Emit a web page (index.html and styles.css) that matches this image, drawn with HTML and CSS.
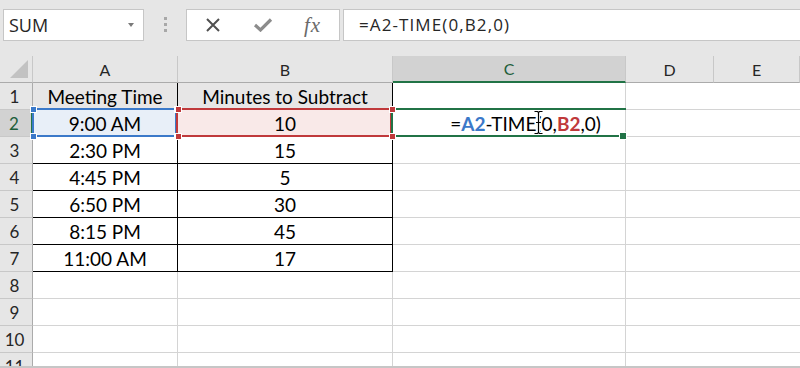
FILE: index.html
```html
<!DOCTYPE html>
<html lang="en">
<head>
    <meta charset="UTF-8">
    <meta name="viewport" content="width=device-width, initial-scale=1.0">
    <title>Subtract minutes from time</title>
    <link rel="stylesheet" href="styles.css">
</head>
<body>
    <div class="toolbar">
        <div class="name-box"><span>SUM</span><span class="caret"></span></div>
        <div class="grip"><i></i><i></i><i></i></div>
        <div class="fx-buttons">
            <svg class="btn-cancel" width="16" height="16" viewBox="0 0 16 16">
                <path d="M2 2 L14 14 M14 2 L2 14" stroke="#505050" stroke-width="2" fill="none"/>
            </svg>
            <svg class="btn-enter" width="20" height="14" viewBox="0 0 20 14">
                <path d="M2 7 L7.5 12 L18 1.5" stroke="#8c8c8c" stroke-width="3.2" fill="none"/>
            </svg>
            <span class="btn-fx">fx</span>
        </div>
        <div class="formula">=A2-TIME(0,B2,0)</div>
    </div>

    <div class="sheet">
        <!-- column headers -->
        <div class="hd corner">
            <svg width="33" height="26" viewBox="0 0 33 26"><polygon points="28,4 28,22 10,22" fill="#c2c2c2"/></svg>
        </div>
        <div class="hd">A</div>
        <div class="hd">B</div>
        <div class="hd col-sel">C</div>
        <div class="hd no-line">D</div>
        <div class="hd no-line">E</div>

        <!-- row 1 -->
        <div class="rh">1</div>
        <div class="c t title">Meeting Time</div>
        <div class="c t title">Minutes to Subtract</div>
        <div class="c"></div>
        <div class="c no-line"></div>
        <div class="c no-line"></div>

        <!-- row 2 -->
        <div class="rh row-sel">2</div>
        <div class="c t ref ref-blue">9:00 AM
            <i class="h tl"></i><i class="h bl"></i><i class="h tr"></i><i class="h br"></i>
        </div>
        <div class="c t ref ref-red">10
            <i class="h tl"></i><i class="h bl"></i><i class="h tr"></i><i class="h br"></i>
        </div>
        <div class="c active">
            <span class="edit">=<b class="blue">A2</b>-TIME(0,<b class="red">B2</b>,0)</span>
            <svg class="ibeam" width="11" height="25" viewBox="0 0 11 25">
                <path d="M1.5 1.5 H4.5 L5.5 2.5 L6.5 1.5 H9.5 M5.5 2.5 V22.5 M1.5 23.5 H4.5 L5.5 22.5 L6.5 23.5 H9.5 M3 12.5 H8" stroke="#fff" stroke-width="3" fill="none"/>
                <path d="M1.5 1.5 H4.5 L5.5 2.5 L6.5 1.5 H9.5 M5.5 2.5 V22.5 M1.5 23.5 H4.5 L5.5 22.5 L6.5 23.5 H9.5 M3 12.5 H8" stroke="#000" stroke-width="1.2" fill="none"/>
            </svg>
            <i class="fill"></i>
        </div>
        <div class="c no-line"></div>
        <div class="c no-line"></div>

        <!-- rows 3 - 7 -->
        <div class="rh">3</div>
        <div class="c t">2:30 PM</div>
        <div class="c t">15</div>
        <div class="c"></div><div class="c no-line"></div><div class="c no-line"></div>

        <div class="rh">4</div>
        <div class="c t">4:45 PM</div>
        <div class="c t">5</div>
        <div class="c"></div><div class="c no-line"></div><div class="c no-line"></div>

        <div class="rh">5</div>
        <div class="c t">6:50 PM</div>
        <div class="c t">30</div>
        <div class="c"></div><div class="c no-line"></div><div class="c no-line"></div>

        <div class="rh">6</div>
        <div class="c t">8:15 PM</div>
        <div class="c t">45</div>
        <div class="c"></div><div class="c no-line"></div><div class="c no-line"></div>

        <div class="rh">7</div>
        <div class="c t">11:00 AM</div>
        <div class="c t">17</div>
        <div class="c"></div><div class="c no-line"></div><div class="c no-line"></div>

        <!-- empty rows -->
        <div class="rh">8</div>
        <div class="c"></div><div class="c"></div><div class="c"></div><div class="c no-line"></div><div class="c no-line"></div>
        <div class="rh">9</div>
        <div class="c"></div><div class="c"></div><div class="c"></div><div class="c no-line"></div><div class="c no-line"></div>
        <div class="rh">10</div>
        <div class="c"></div><div class="c"></div><div class="c"></div><div class="c no-line"></div><div class="c no-line"></div>
        <div class="rh">11</div>
        <div class="c"></div><div class="c"></div><div class="c"></div><div class="c no-line"></div><div class="c no-line"></div>
    </div>
    <div class="footer"></div>
</body>
</html>
```

FILE: styles.css
```css
* {
    box-sizing: border-box;
}
body {
    margin: 0;
    width: 800px;
    height: 368px;
    overflow: hidden;
    background-color: #e6e6e6;
    font-family: Lato, "Liberation Sans", sans-serif;
    color: #000;
}

/* formula bar */
.toolbar {
    display: flex;
    height: 56px;
    padding: 9px 0 0 3px;
}
.name-box {
    width: 141px;
    height: 32px;
    background-color: #fff;
    border: 1px solid #c6c6c6;
    display: flex;
    align-items: center;
    justify-content: space-between;
    padding: 0 9px 0 5px;
    font-family: "Open Sans", sans-serif;
    font-size: 18px;
    color: #262626;
}
.name-box .caret {
    width: 0;
    height: 0;
    border-left: 3.5px solid transparent;
    border-right: 3.5px solid transparent;
    border-top: 4px solid #7a7a7a;
}
.grip {
    width: 42px;
    display: flex;
    flex-direction: column;
    align-items: center;
    gap: 3px;
    padding-top: 8px;
}
.grip i {
    width: 3px;
    height: 3px;
    background-color: #a8a8a8;
}
.fx-buttons {
    width: 154px;
    height: 32px;
    background-color: #fff;
    border: 1px solid #c6c6c6;
    display: flex;
    align-items: center;
}
.fx-buttons .btn-cancel {
    margin-left: 18px;
}
.fx-buttons .btn-enter {
    margin-left: 32px;
}
.fx-buttons .btn-fx {
    margin-left: 31px;
    font-family: "Liberation Serif", serif;
    font-style: italic;
    font-size: 21px;
    color: #6a6a6a;
    letter-spacing: 1px;
}
.formula {
    flex: 1;
    margin-left: 3px;
    height: 32px;
    background-color: #fff;
    border: 1px solid #c6c6c6;
    border-right: 0;
    padding-left: 15px;
    font-family: "Open Sans", sans-serif;
    font-size: 17px;
    letter-spacing: 1.1px;
    line-height: 30px;
    color: #262626;
}

/* grid */
.sheet {
    display: grid;
    grid-template-columns: 33px 145px 215px 233px 88px 1fr;
    grid-auto-rows: 27px;
    height: 310px;
    overflow: hidden;
    background-color: #fff;
}
.hd {
    background-color: #e6e6e6;
    border-right: 1px solid #c8c8c8;
    border-bottom: 1px solid #ababab;
    display: flex;
    align-items: center;
    justify-content: center;
    font-size: 16px;
    color: #262626;
}
.hd.corner {
    display: block;
}
.hd.corner svg {
    display: block;
}
.hd.col-sel {
    background-color: #d2d2d2;
    border-bottom: 2px solid #217346;
    color: #1e5e3a;
}
.rh {
    background-color: #e6e6e6;
    border-right: 1px solid #ababab;
    border-bottom: 1px solid #c8c8c8;
    display: flex;
    align-items: center;
    justify-content: center;
    font-size: 17px;
    color: #262626;
    padding-right: 3px;
}
.rh.row-sel {
    background-color: #d2d2d2;
    border-right: 2px solid #217346;
    color: #1e5e3a;
}
.c {
    border-right: 1px solid #d4d4d4;
    border-bottom: 1px solid #d4d4d4;
    display: flex;
    align-items: center;
    justify-content: center;
    font-size: 19px;
    white-space: nowrap;
}
.c.no-line {
    border-right: 0;
}
.c.t {
    border-color: #000;
}
.c.title {
    background-color: #e7e6e6;
}

/* reference highlights in row 2 */
.ref {
    position: relative;
}
.ref::before {
    content: "";
    position: absolute;
    top: -2px;
    bottom: -1px;
    left: -1px;
    right: 0;
    border: 2px solid;
    z-index: 1;
}
.ref-blue {
    background-color: #e8eff8;
}
.ref-blue::before {
    border-color: #3b79c9;
}
.ref-blue .h {
    background-color: #3b79c9;
}
.ref-red {
    background-color: #f9e9e8;
}
.ref-red::before {
    left: -2px;
    border-color: #c0393b;
}
.ref-red .h {
    background-color: #c0393b;
}
.h {
    position: absolute;
    width: 5px;
    height: 5px;
    box-shadow: 0 0 0 1px #fff;
    z-index: 3;
}
.h.tl { top: -3px; left: -2px; }
.h.bl { bottom: -3px; left: -2px; }
.h.tr { top: -3px; right: -3px; }
.h.br { bottom: -3px; right: -3px; }

/* active cell */
.active {
    position: relative;
    padding-left: 33px;
}
.active::before {
    content: "";
    position: absolute;
    top: -2px;
    bottom: -1px;
    left: -2px;
    right: -1px;
    border: 2px solid #217346;
    border-right: 0;
    z-index: 2;
}
.active .edit b {
    font-weight: bold;
}
.active .blue {
    color: #3b79c9;
}
.active .red {
    color: #c0393b;
}
.active .ibeam {
    position: absolute;
    left: 140px;
    top: 0;
    z-index: 4;
}
.active .fill {
    position: absolute;
    right: -1px;
    bottom: -3px;
    width: 6px;
    height: 6px;
    background-color: #217346;
    box-shadow: 0 0 0 1px #fff;
    z-index: 3;
}

.footer {
    height: 2px;
    background-color: #c6c6c6;
}
```
